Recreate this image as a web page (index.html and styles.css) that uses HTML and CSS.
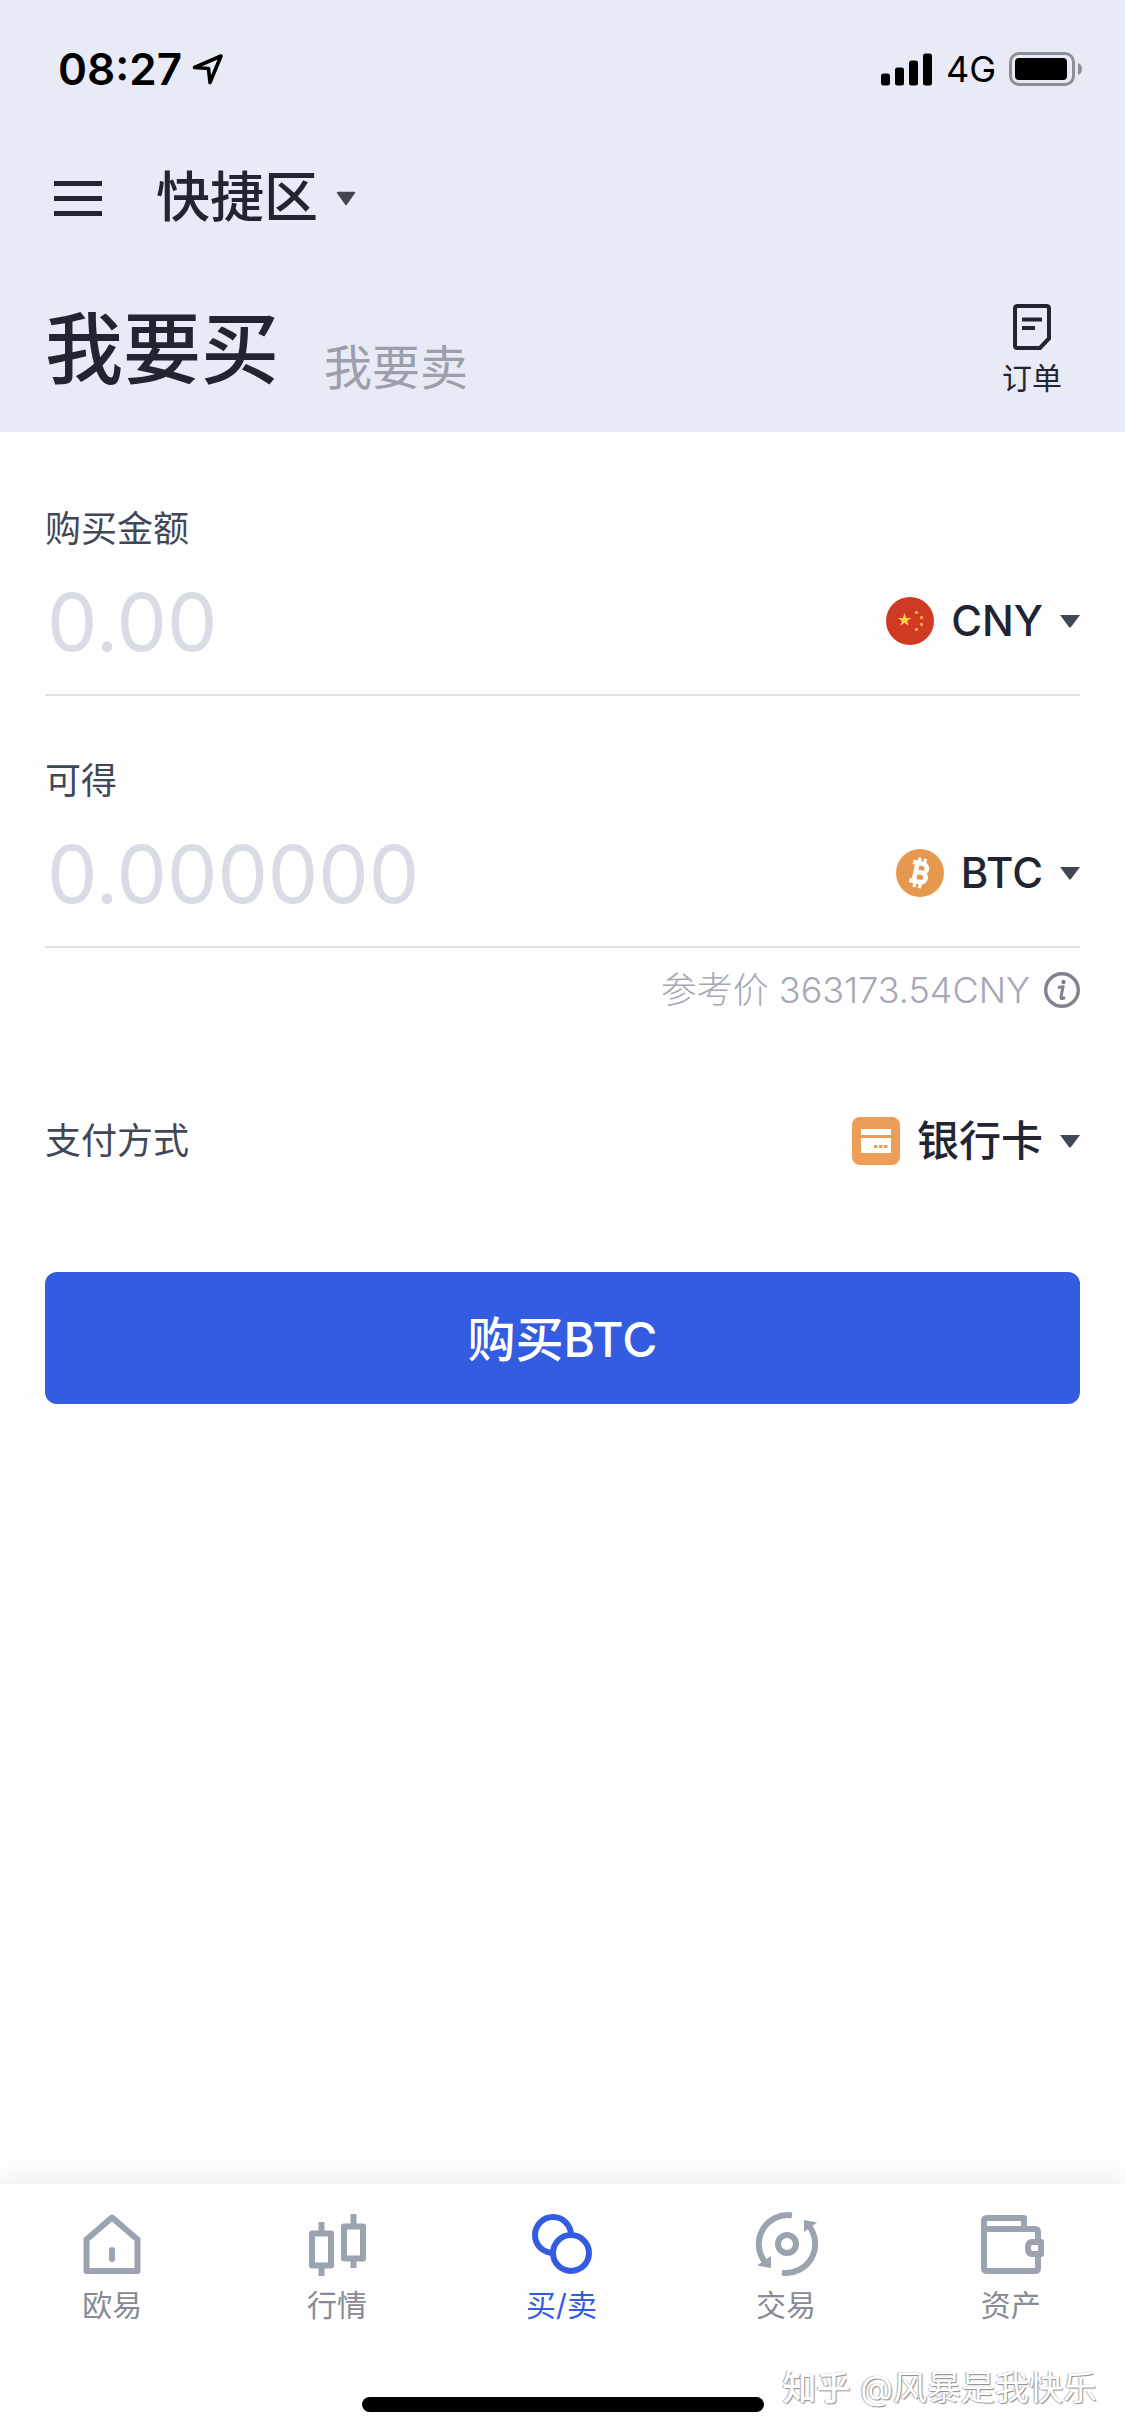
FILE: index.html
```html
<!DOCTYPE html>
<html lang="zh-CN">
<head>
<meta charset="utf-8">
<meta name="viewport" content="width=device-width, initial-scale=1">
<title>快捷区</title>
<link rel="stylesheet" href="styles.css">
</head>
<body>
<div class="app">
  <header class="header">
    <div class="status">
      <div class="status-group">
        <span class="time">08:27</span>
        <svg class="location" width="32" height="32" viewBox="0 0 32 32" aria-hidden="true"><path d="M2.500 14.500 L29 3 L18 29.500 L16.500 15.500 Z" fill="none" stroke="#000" stroke-width="3.600" stroke-linejoin="round"/></svg>
      </div>
      <div class="status-group status-right">
        <svg width="52" height="33" viewBox="0 0 52 33" aria-hidden="true"><rect x="0" y="20.500" width="9" height="12" rx="2.500"/><rect x="14" y="14.500" width="9" height="18" rx="2.500"/><rect x="28" y="7.500" width="9" height="25" rx="2.500"/><rect x="42" y="0.500" width="9" height="32" rx="2.500"/></svg>
        <span class="network">4G</span>
        <svg width="74" height="34" viewBox="0 0 74 34" aria-hidden="true"><rect x="1.500" y="1.500" width="63" height="31" rx="8.500" fill="none" stroke="#8e9097" stroke-width="3"/><rect x="6" y="6" width="52" height="22" rx="4"/><path d="M69 11 q4 1.500 4 6 t-4 6 z" fill="#8e9097"/></svg>
      </div>
    </div>
    <div class="nav">
      <button class="plain" type="button" aria-label="菜单"><svg width="48" height="35" viewBox="0 0 48 35"><path d="M0 2.500h48M0 17.500h48M0 32.500h48" stroke="#222531" stroke-width="5"/></svg></button>
      <button class="plain zone" type="button">快捷区<svg width="20" height="15" viewBox="0 0 20 15" aria-hidden="true"><path d="M1.500 1.500h17l-8.500 12z" fill="#424757" stroke="#424757" stroke-width="1.500" stroke-linejoin="round"/></svg></button>
    </div>
    <div class="modes">
      <button class="plain mode-active" type="button">我要买</button>
      <button class="plain mode" type="button">我要卖</button>
      <a class="orders" href="#orders"><svg width="38" height="46" viewBox="0 0 38 46" aria-hidden="true"><path d="M4.500 2h29q2.500 0 2.500 2.500V34.500L27 44H4.500Q2 44 2 41.500V4.500Q2 2 4.500 2zM9 15.500h20M9 24h13" fill="none" stroke="#222531" stroke-width="4"/></svg>订单</a>
    </div>
  </header>
  <main class="main">
    <form class="form">
      <div class="field">
        <label class="label" for="pay">购买金额</label>
        <div class="row">
          <input class="amount" id="pay" type="text" placeholder="0.00">
          <button class="plain picker" type="button">
            <svg width="48" height="48" viewBox="0 0 48 48" aria-hidden="true"><circle cx="24" cy="24" r="24" fill="#cf3a22"/><path d="M18.500 16l1.600 4.900h5.100l-4.100 3 1.500 4.900-4.100-3-4.100 3 1.500-4.900-4.100-3h5.100z" fill="#fcd44a"/><g fill="#f6a64a"><circle cx="30.500" cy="15.500" r="1.700"/><circle cx="35.500" cy="20.500" r="1.700"/><circle cx="35.500" cy="27.500" r="1.700"/><circle cx="30.500" cy="32.500" r="1.700"/></g></svg>
            <span class="picker-text">CNY</span>
            <svg width="20" height="13" viewBox="0 0 20 13" aria-hidden="true"><path d="M0 0h20L11 12q-1 1-2 0z" fill="#424757"/></svg>
          </button>
        </div>
      </div>
      <div class="field">
        <label class="label" for="get">可得</label>
        <div class="row">
          <input class="amount" id="get" type="text" placeholder="0.000000">
          <button class="plain picker" type="button">
            <svg width="48" height="48" viewBox="0 0 48 48" aria-hidden="true"><circle cx="24" cy="24" r="24" fill="#e6984f"/><g transform="rotate(12 24 24)" fill="none" stroke="#fff"><path d="M15 14.500h10.500a4.400 4.400 0 0 1 0 9H19M19 23.500h7.500a4.800 4.800 0 0 1 0 9.500H15M19.500 14v19" stroke-width="4.600"/><path d="M21 9v5M26.500 9v5M21 34v5M26.500 34v5" stroke-width="3.200"/></g></svg>
            <span class="picker-text">BTC</span>
            <svg width="20" height="13" viewBox="0 0 20 13" aria-hidden="true"><path d="M0 0h20L11 12q-1 1-2 0z" fill="#424757"/></svg>
          </button>
        </div>
      </div>
      <p class="price">参考价 363173.54CNY<svg width="36" height="36" viewBox="0 0 36 36" aria-hidden="true"><circle cx="18" cy="18" r="16.300" fill="none" stroke="#80838f" stroke-width="3.400"/><circle cx="19.500" cy="10" r="2.200" fill="#80838f"/><path d="M14 16q2.500-1.200 5-1.200L17 25q-.3 2 1.500 1.500l2.500-1" fill="none" stroke="#80838f" stroke-width="3"/></svg></p>
      <div class="method">
        <span class="label">支付方式</span>
        <button class="plain picker" type="button">
          <svg width="48" height="48" viewBox="0 0 48 48" aria-hidden="true"><rect width="48" height="48" rx="8" fill="#ec9d58"/><path d="M9 12h30v6H9zM9 21h30v15H9z" fill="#fff"/><path d="M22 29.500h14" stroke="#ec9d58" stroke-width="3" stroke-dasharray="3.500 1.500"/></svg>
          <span class="picker-text">银行卡</span>
          <svg width="20" height="13" viewBox="0 0 20 13" aria-hidden="true"><path d="M0 0h20L11 12q-1 1-2 0z" fill="#424757"/></svg>
        </button>
      </div>
      <button class="submit" type="button">购买BTC</button>
    </form>
  </main>
  <footer class="footer">
    <nav class="tabs">
      <a class="tab" href="#home"><svg width="66" height="66" viewBox="0 0 66 66" aria-hidden="true"><path d="M7.500 28.500 33 6.500 58.500 28.500V60H7.500z" fill="none" stroke="#9ba2b0" stroke-width="6" stroke-linejoin="round"/><path d="M33 39v9" stroke="#9ba2b0" stroke-width="6" stroke-linecap="round"/></svg>欧易</a>
      <a class="tab" href="#market"><svg width="66" height="66" viewBox="0 0 66 66" aria-hidden="true"><g fill="none" stroke="#9ba2b0" stroke-width="6" stroke-linejoin="round"><path d="M8 22.500h19v32H8zM40 15.500h19v32H40z"/><path d="M17.500 11v11M17.500 54v11M49.500 3v11M49.500 47v10"/></g></svg>行情</a>
      <a class="tab tab-active" href="#trade"><svg width="66" height="66" viewBox="0 0 66 66" aria-hidden="true"><g fill="#fff" stroke="#335ce0" stroke-width="6"><circle cx="25" cy="24" r="18"/><circle cx="43" cy="42" r="18"/></g></svg>买/卖</a>
      <a class="tab" href="#exchange"><svg width="66" height="66" viewBox="0 0 66 66" aria-hidden="true"><g fill="none" stroke="#9ba2b0" stroke-width="6"><circle cx="34" cy="33" r="9"/><path d="M39 4.400A29 29 0 0 0 12 51M29 61.600A29 29 0 0 0 56 15"/></g><path d="M4 54.500l14 2.500V45zM64 11.500L51 9v12z" fill="#9ba2b0"/></svg>交易</a>
      <a class="tab" href="#assets"><svg width="66" height="66" viewBox="0 0 66 66" aria-hidden="true"><g fill="none" stroke="#9ba2b0" stroke-width="6" stroke-linejoin="round"><path d="M6 18V10q0-3 3-3H46v11M6 18H57q3 0 3 3V29M60 45V57q0 3-3 3H9q-3 0-3-3V18"/><path d="M63 31V43H54q-4 0-4-6t4-6z"/></g></svg>资产</a>
    </nav>
    <div class="home-row"><div class="home-bar"></div><span class="watermark"><b>知乎</b> @风暴是我快乐</span></div>
  </footer>
</div>
</body>
</html>
```
FILE: styles.css
```css
* { box-sizing: border-box; }
body {
  margin: 0;
  background: #fefefe;
  color: #222531;
  font-family: Inter, "Noto Sans CJK SC", sans-serif;
}
svg { display: block; flex: none; }
.plain {
  padding: 0;
  border: 0;
  background: none;
  color: inherit;
  font: inherit;
}
.app { min-height: 100vh; display: flex; flex-direction: column; }

.header { background: #e8ebf5; padding: 40px 45px 32px; }
.status { display: flex; justify-content: space-between; align-items: center; height: 58px; color: #000; }
.status-group { display: flex; align-items: center; gap: 10px; padding-left: 13px; }
.time { font-size: 44px; font-weight: 600; line-height: 58px; }
.status-right { gap: 13px; margin-right: -3px; }
.network { font-size: 36px; font-weight: 400; line-height: 58px; }
.nav { display: flex; align-items: center; gap: 54px; height: 72px; margin-top: 64px; padding-left: 9px; }
.zone { display: flex; align-items: center; gap: 18px; font-size: 54px; font-weight: 500; line-height: 72px; }
.modes { display: flex; align-items: flex-end; gap: 45px; margin-top: 68px; height: 98px; }
.mode-active { font-size: 78px; font-weight: 500; line-height: 100px; }
.mode { font-size: 48px; line-height: 64px; color: #9a9fab; }
.orders {
  display: flex;
  flex-direction: column;
  align-items: center;
  gap: 8px;
  margin: 0 18px 2px auto;
  color: inherit;
  font-size: 30px;
  line-height: 40px;
  text-decoration: none;
}

.main { flex: 1; }
.form { padding: 72px 45px 0; }
.field { border-bottom: 2px solid #dfe0e4; height: 192px; margin-bottom: 60px; }
.label { display: block; font-size: 36px; line-height: 50px; color: #424757; font-weight: 400; }
.row { display: flex; align-items: center; justify-content: space-between; height: 134px; }
.amount {
  flex: 1;
  min-width: 0;
  height: 132px;
  padding: 0 0 0 2px;
  border: 0;
  background: none;
  color: #222531;
  font: 400 80px Inter, sans-serif;
}
.amount::placeholder { color: #d9dce4; opacity: 1; }
.picker { display: flex; align-items: center; gap: 17px; }
.picker-text { font-size: 42px; font-weight: 500; line-height: 56px; }
.price {
  display: flex;
  align-items: center;
  justify-content: flex-end;
  gap: 14px;
  margin: -43px 0 0;
  height: 50px;
  font-size: 36px;
  line-height: 46px;
  font-weight: 300;
  color: #a5a8b5;
}
.method { display: flex; align-items: center; justify-content: space-between; height: 56px; margin: 98px 0 103px; }
.submit {
  display: block;
  width: 100%;
  height: 132px;
  padding: 0 0 4px;
  border: 0;
  border-radius: 12px;
  background: #335ce0;
  color: #fff;
  font: 500 48px Inter, "Noto Sans CJK SC", sans-serif;
}

.footer { background: #fefefe; box-shadow: 0 0 30px rgba(0, 0, 0, 0.1); height: 252px; }
.tabs { display: grid; grid-template-columns: repeat(5, 1fr); padding: 27px 2px 0 0; }
.tab {
  display: flex;
  flex-direction: column;
  align-items: center;
  gap: 8px;
  font-size: 30px;
  font-weight: 400;
  line-height: 40px;
  color: #888b93;
  text-decoration: none;
}
.tab-active { color: #335ce0; }
.home-row { position: relative; margin-top: 72px; }
.home-bar { width: 402px; height: 15px; margin: 0 auto; border-radius: 8px; background: #000; }
.watermark {
  position: absolute;
  right: 28px;
  bottom: 0;
  font-size: 34px;
  line-height: 48px;
  color: #fff;
  text-shadow: -1px 0 1px #aaa, 1px 1px 1px #888;
}
.watermark b { font-weight: 500; }
```
